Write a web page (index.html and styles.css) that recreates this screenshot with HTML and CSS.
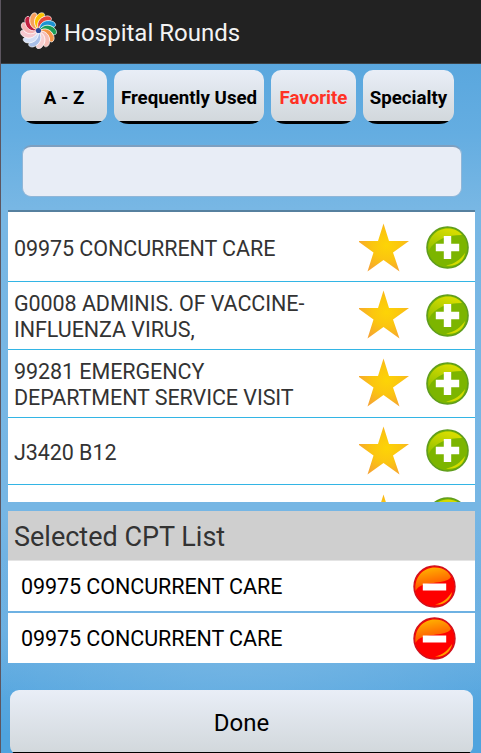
FILE: index.html
```html
<!DOCTYPE html>
<html lang="en">
<head>
  <meta charset="UTF-8">
  <meta name="viewport" content="width=device-width, initial-scale=1.0">
  <title>Hospital Rounds</title>
  <link rel="stylesheet" href="styles.css">
</head>
<body>
  <!-- shared icons -->
  <svg class="defs" width="0" height="0">
    <defs>
      <radialGradient id="starFill" cx="0.55" cy="0.45" r="0.6">
        <stop offset="0" stop-color="#fdd406"/>
        <stop offset="0.5" stop-color="#fbc510"/>
        <stop offset="1" stop-color="#f6a432"/>
      </radialGradient>
      <linearGradient id="greenShine" x1="0" y1="1" x2="0.5" y2="0">
        <stop offset="0" stop-color="#8fc000"/>
        <stop offset="1" stop-color="#d6dc00"/>
      </linearGradient>
      <linearGradient id="redShine" x1="0.7" y1="1" x2="0.4" y2="0">
        <stop offset="0" stop-color="#ff3c00"/>
        <stop offset="1" stop-color="#ffb000"/>
      </linearGradient>
      <path id="petal" d="M0 -1C-5 -4 -6 -11 0 -16C3 -18.500 7.500 -17 5.500 -13.500C1 -12 -2 -7 0 -1Z"/>
      <symbol id="star" viewBox="0 0 50 49">
        <path fill="url(#starFill)" d="M24.500 0.500L30 18H50L34 29.500L40.500 48.500L24.500 37L8.500 48.500L14.500 29.500L0 19V18H19Z"/>
      </symbol>
      <symbol id="plus" viewBox="0 0 43 43">
        <circle cx="21.500" cy="21.500" r="20.500" fill="#7cb500" stroke="#5f9d1c" stroke-width="1.600"/>
        <path fill="url(#greenShine)" d="M2.500 25C1 12 10 2.500 22 2.500C28 2.500 33 5 36 9C22 9 9 13 2.500 25Z"/>
        <path fill="#d3dc00" d="M20 39.500C29 38 35 33 39 27C38 35 31 41 20 39.500Z"/>
        <path fill="#fff" d="M17.800 10h7.400v7.800h8v7.400h-8v7.800h-7.400v-7.800h-8v-7.400h8z"/>
      </symbol>
      <symbol id="minus" viewBox="0 0 43 43">
        <circle cx="21.500" cy="21.500" r="20.500" fill="#fe0000" stroke="#d0101c" stroke-width="1.400"/>
        <path fill="url(#redShine)" d="M2.500 26C1 12 10 2.500 22 2.500C31 2.500 36 7 38 12C32 21 9 14 2.500 26Z"/>
        <path fill="#ff9c00" d="M22 39.500C30 38 35 33 39 27C38 35 31 40.500 22 39.500Z"/>
        <path fill="#fff" d="M9.800 18.500h23.400v7h-23.400z"/>
      </symbol>
    </defs>
  </svg>

  <div class="app">
    <header>
      <svg class="logo" viewBox="-18 -18 36 36">
        <circle r="14.500" fill="#f3f3f6"/>
        <g stroke="#fff" stroke-width="0.600">
          <use href="#petal" fill="#fbc200"/>
          <use href="#petal" fill="#e8453a" transform="rotate(28)"/>
          <use href="#petal" fill="#1c93d2" transform="rotate(55)"/>
          <use href="#petal" fill="#1a9c55" transform="rotate(83)"/>
          <use href="#petal" fill="#f49444" transform="rotate(111)"/>
          <use href="#petal" fill="#f6bdb6" transform="rotate(138)"/>
          <use href="#petal" fill="#f7cfd0" transform="rotate(166)"/>
          <use href="#petal" fill="#a9bfe8" transform="rotate(194)"/>
          <use href="#petal" fill="#d3def5" transform="rotate(221)"/>
          <use href="#petal" fill="#f6c8cf" transform="rotate(249)"/>
          <use href="#petal" fill="#f4b3b4" transform="rotate(277)"/>
          <use href="#petal" fill="#bf1f3f" transform="rotate(304)"/>
          <use href="#petal" fill="#f6a05c" transform="rotate(332)"/>
        </g>
        <circle r="2.500" fill="#2b4a9b"/>
      </svg>
      <h1>Hospital Rounds</h1>
    </header>

    <main>
      <nav>
        <button class="tab az">A - Z</button>
        <button class="tab frequent">Frequently Used</button>
        <button class="tab favorite active">Favorite</button>
        <button class="tab specialty">Specialty</button>
      </nav>
      <input type="text" class="search">

      <ul class="codes">
        <li>
          <span>09975 CONCURRENT CARE</span>
          <svg class="star"><use href="#star"/></svg>
          <svg class="round"><use href="#plus"/></svg>
        </li>
        <li>
          <span>G0008 ADMINIS. OF VACCINE-<br>INFLUENZA VIRUS,</span>
          <svg class="star"><use href="#star"/></svg>
          <svg class="round"><use href="#plus"/></svg>
        </li>
        <li>
          <span>99281 EMERGENCY<br>DEPARTMENT SERVICE VISIT</span>
          <svg class="star"><use href="#star"/></svg>
          <svg class="round"><use href="#plus"/></svg>
        </li>
        <li>
          <span>J3420 B12</span>
          <svg class="star"><use href="#star"/></svg>
          <svg class="round"><use href="#plus"/></svg>
        </li>
        <li>
          <span></span>
          <svg class="star"><use href="#star"/></svg>
          <svg class="round"><use href="#plus"/></svg>
        </li>
      </ul>

      <section class="selected">
        <h2>Selected CPT List</h2>
        <ul>
          <li>
            <span>09975 CONCURRENT CARE</span>
            <svg class="round"><use href="#minus"/></svg>
          </li>
          <li>
            <span>09975 CONCURRENT CARE</span>
            <svg class="round"><use href="#minus"/></svg>
          </li>
        </ul>
      </section>

      <button class="done">Done</button>
    </main>
  </div>
</body>
</html>
```
FILE: styles.css
```css
* {
  box-sizing: border-box;
}
body {
  font-family: Roboto, sans-serif;
  margin: 0;
  padding: 0;
  overflow: hidden;
}
ul, h1, h2 {
  margin: 0;
  padding: 0;
  list-style-type: none;
  font-weight: normal;
}
button {
  font-family: inherit;
  border: none;
  color: #000;
}
.defs {
  display: block;
}
.app {
  height: 753px;
  overflow: hidden;
  border-left: 1px solid #5d5660;
}
header {
  display: flex;
  align-items: center;
  height: 64px;
  padding: 0 0 3px 19px;
  background-color: #222;
  border-bottom: 1px solid #3a4248;
}
.logo {
  width: 37px;
  height: 37px;
}
h1 {
  margin: 5px 0 0 7px;
  font-size: 24px;
  color: #f3f3f3;
}
main {
  height: 689px;
  padding: 6px 6px 0 7px;
  background:
    radial-gradient(ellipse 75% 120px at 50% 580px, #76b6e4, transparent),
    linear-gradient(#5aa7de, #64ade1 10%, #78b7e4 21%, #76b6e4 65%, #68aee1 82%, #4fa3de 92%);
}
nav {
  display: flex;
  gap: 7px;
  padding-left: 13px;
}
.tab {
  height: 54px;
  padding: 2px 0 0;
  font-size: 18.700px;
  font-weight: bold;
  border-radius: 10px 10px 15px 15px / 10px 10px 12px 12px;
  background: linear-gradient(#e9eef7, #d2d8dc 51px, #000 51px);
}
.az {
  width: 86px;
}
.frequent {
  width: 150px;
}
.favorite {
  width: 85px;
}
.specialty {
  width: 91px;
}
.active {
  color: #ff3225;
}
.search {
  display: block;
  width: 440px;
  height: 52px;
  margin: 21px 0 13px 14px;
  border: 1px solid #8fb6d8;
  border-top: 2px solid #7d9fc0;
  border-radius: 9px;
  background-color: #e8edf6;
}
.codes {
  height: 292px;
  overflow: hidden;
  border-top: 2px solid #56809f;
  background-color: #fff;
}
.codes li {
  display: flex;
  align-items: center;
  height: 67.800px;
  padding: 0 6px;
  line-height: 25.500px;
  color: #333;
  border-bottom: 1px solid #33b5e5;
}
.codes li:first-child {
  height: 70px;
  padding-top: 2px;
}
li span {
  flex: 1;
  font-size: 21.500px;
  letter-spacing: -0.070px;
}
.codes span {
  padding-top: 3px;
}
.star {
  width: 50px;
  height: 49px;
  margin: -1px 17px 0 0;
}
.round {
  width: 43px;
  height: 43px;
}
.selected {
  margin-top: 9px;
}
.selected h2 {
  height: 50px;
  padding-left: 6px;
  font-size: 27px;
  line-height: 53px;
  color: #333;
  background-color: #cfcfcf;
  border-bottom: 1px solid #e4e4e4;
}
.selected li {
  display: flex;
  align-items: center;
  height: 50px;
  padding: 0 19px 0 13px;
  background-color: #fff;
}
.selected li + li {
  margin-top: 2px;
}
.selected span {
  padding-top: 1px;
}
.done {
  display: block;
  width: 463px;
  height: 65px;
  margin: 27px 0 0 2px;
  padding: 1px 0 0;
  font-size: 24px;
  border-radius: 9px;
  background: linear-gradient(#e9eef7, #d2d8dc 62px, #000 62px);
}
```
